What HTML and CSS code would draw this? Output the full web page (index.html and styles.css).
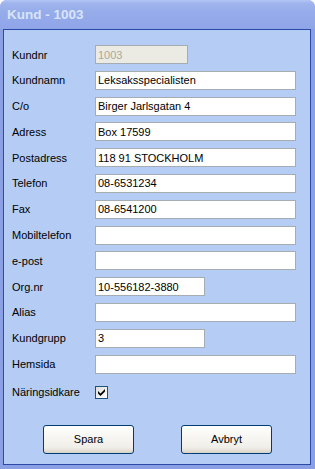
FILE: index.html
```html
<!DOCTYPE html>
<html lang="sv">
<head>
    <meta charset="UTF-8">
    <title>Kund - 1003</title>
    <link rel="stylesheet" href="styles.css">
</head>
<body>
    <div class="window">
        <div class="titlebar">Kund - 1003</div>
        <div class="client">
            <div class="form">
                <div class="row"><label>Kundnr</label><input class="field tiny" type="text" value="1003" disabled></div>
                <div class="row"><label>Kundnamn</label><input class="field" type="text" value="Leksaksspecialisten"></div>
                <div class="row"><label>C/o</label><input class="field" type="text" value="Birger Jarlsgatan 4"></div>
                <div class="row"><label>Adress</label><input class="field" type="text" value="Box 17599"></div>
                <div class="row"><label>Postadress</label><input class="field" type="text" value="118 91 STOCKHOLM"></div>
                <div class="row"><label>Telefon</label><input class="field" type="text" value="08-6531234"></div>
                <div class="row"><label>Fax</label><input class="field" type="text" value="08-6541200"></div>
                <div class="row"><label>Mobiltelefon</label><input class="field" type="text" value=""></div>
                <div class="row"><label>e-post</label><input class="field" type="text" value=""></div>
                <div class="row"><label>Org.nr</label><input class="field short" type="text" value="10-556182-3880"></div>
                <div class="row"><label>Alias</label><input class="field" type="text" value=""></div>
                <div class="row"><label>Kundgrupp</label><input class="field short" type="text" value="3"></div>
                <div class="row"><label>Hemsida</label><input class="field" type="text" value=""></div>
            </div>
            <div class="row check-row">
                <label>Näringsidkare</label>
                <span class="checkbox">
                    <svg width="11" height="11" viewBox="0 0 11 11">
                        <path d="M2 4 L4.5 6.5 L9 2 L9 4.5 L4.5 9 L2 6.5 Z" fill="#000"/>
                    </svg>
                </span>
            </div>
            <div class="buttons">
                <button class="btn">Spara</button>
                <button class="btn">Avbryt</button>
            </div>
        </div>
    </div>
</body>
</html>
```

FILE: styles.css
```css
html, body {
    margin: 0;
    background: #fff;
}

body {
    font-family: 'Liberation Sans', Arial, sans-serif;
    font-size: 11px;
    color: #000;
}

.window {
    width: 315px;
    height: 469px;
    box-sizing: border-box;
    background: #8a9fe4;
    padding: 0 4px 4px 3px;
    border-radius: 7px 7px 0 0;
    display: flex;
    flex-direction: column;
}

.titlebar {
    height: 29px;
    margin: 0 -4px 0 -3px;
    padding-left: 7px;
    border-radius: 7px 7px 0 0;
    background: linear-gradient(180deg, #b4c6f3 0%, #9fb4ed 12%, #95abea 45%, #8fa5e8 100%);
    color: #d8e4f8;
    font-size: 13.5px;
    font-weight: bold;
    line-height: 30px;
}

.client {
    flex: 1;
    background: #b5cdf4;
    border: 1px solid #2b4aa8;
    padding: 15px 0 0 8px;
}

.form {
    display: flex;
    flex-direction: column;
    gap: 6.8px;
}

.row {
    display: flex;
    align-items: center;
    height: 19px;
}

.row label {
    width: 83px;
}

.field {
    box-sizing: border-box;
    width: 201px;
    height: 19px;
    margin: 0;
    padding: 0 2px;
    border: 1px solid #a5acb2;
    background: #fff;
    font-family: 'Liberation Sans', Arial, sans-serif;
    font-size: 11px;
    color: #000;
    outline: none;
}

.field.short {
    width: 110px;
}

.field.tiny {
    width: 93px;
}

.field:disabled {
    background: #ebebe4;
    color: #aca899;
}

.check-row {
    margin-top: 12px;
    height: 13px;
}

.checkbox {
    box-sizing: border-box;
    width: 13px;
    height: 13px;
    border: 1px solid #1c5180;
    background: linear-gradient(135deg, #dcdcd7, #fff);
    display: flex;
    align-items: center;
    justify-content: center;
}

.buttons {
    display: flex;
    gap: 47px;
    padding-left: 31px;
    margin-top: 26px;
}

.btn {
    box-sizing: border-box;
    width: 91px;
    height: 29px;
    border: 1px solid #003c74;
    border-radius: 3px;
    background: linear-gradient(180deg, #ffffff 0%, #f7f6f2 40%, #efeee8 80%, #e2ded4 92%, #d6d0c5 100%);
    font-family: 'Liberation Sans', Arial, sans-serif;
    font-size: 11px;
    color: #000;
    padding: 0;
}
```
